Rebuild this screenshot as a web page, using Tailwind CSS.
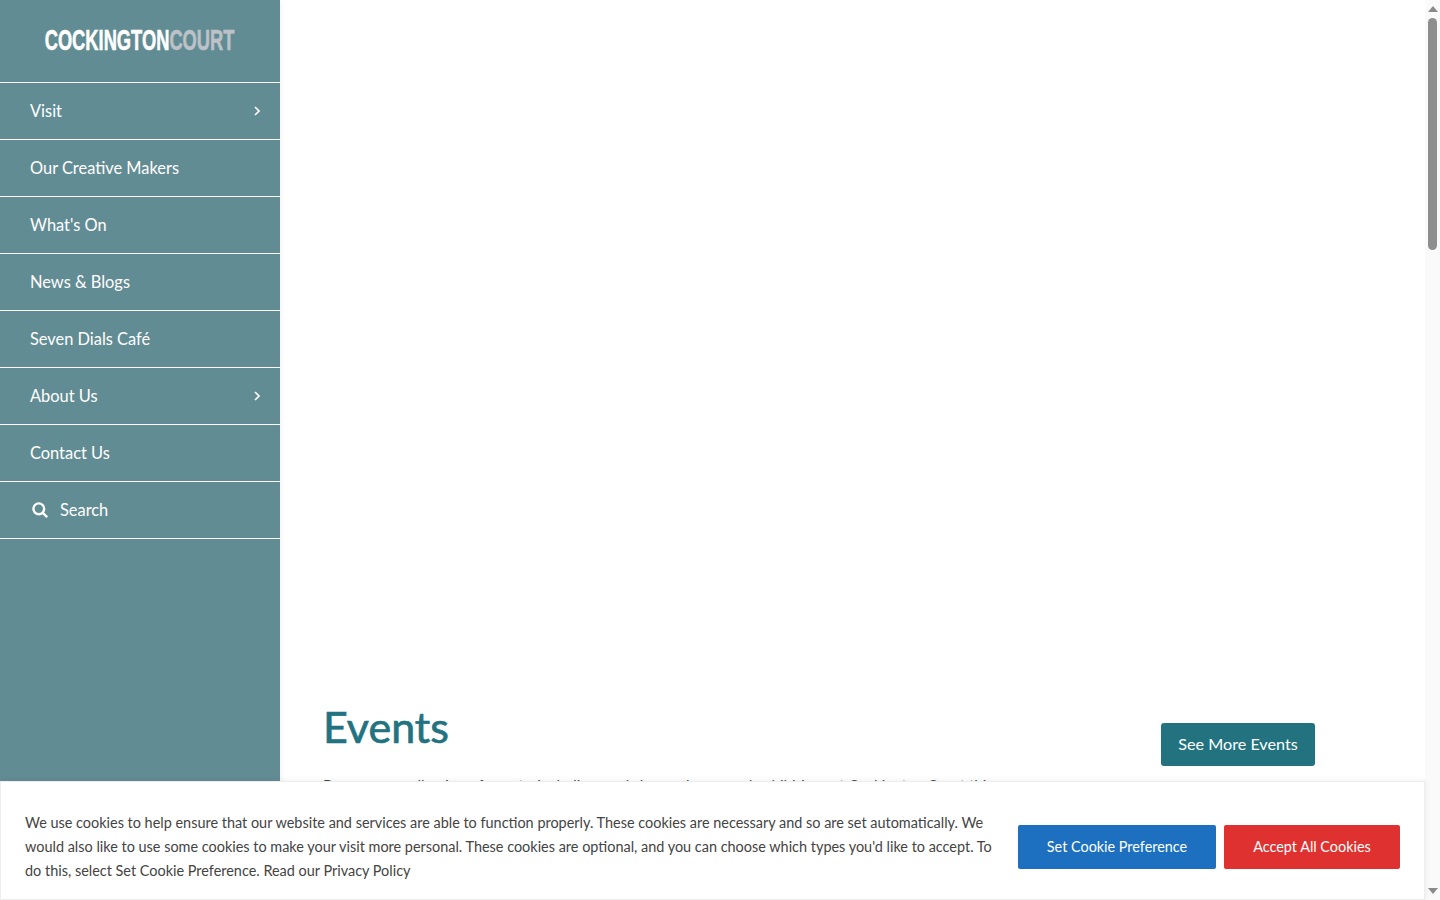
<!DOCTYPE html>
<html lang="en">
<head>
  <meta charset="UTF-8" />
  <meta name="viewport" content="width=device-width, initial-scale=1" />
  <title>Events - Cockington Court</title>
  <script src="https://cdn.jsdelivr.net/npm/@tailwindcss/browser@4"></script>
</head>
<body class="bg-white overflow-hidden font-['Lato',sans-serif]">
  <div class="relative flex h-[900px] w-[1440px] overflow-hidden">
    <!-- sidebar -->
    <aside class="w-[280px] shrink-0 bg-[#628c94] text-white shadow-[0_0_6px_rgba(0,0,0,0.08)]">
      <div class="h-[83px] flex items-center justify-center border-b border-white pb-[2px]">
        <span class="font-['Liberation_Sans',sans-serif] font-bold text-[30px] leading-none scale-x-[0.61] whitespace-nowrap [-webkit-text-stroke:0.6px]">COCKINGTON<span class="text-[#bcc2c7]">COURT</span></span>
      </div>
      <nav class="text-[16.4px]">
        <a class="h-[57px] flex items-center justify-between pl-[30px] pr-[20px] border-b border-white">Visit
          <svg class="w-[6px] h-[10px]" viewBox="0 0 6 10" fill="none" stroke="white" stroke-width="1.6"><path d="M1 1l4 4-4 4" /></svg>
        </a>
        <a class="h-[57px] flex items-center pl-[30px] border-b border-white">Our Creative Makers</a>
        <a class="h-[57px] flex items-center pl-[30px] border-b border-white">What's On</a>
        <a class="h-[57px] flex items-center pl-[30px] border-b border-white">News &amp; Blogs</a>
        <a class="h-[57px] flex items-center pl-[30px] border-b border-white">Seven Dials Café</a>
        <a class="h-[57px] flex items-center justify-between pl-[30px] pr-[20px] border-b border-white">About Us
          <svg class="w-[6px] h-[10px]" viewBox="0 0 6 10" fill="none" stroke="white" stroke-width="1.6"><path d="M1 1l4 4-4 4" /></svg>
        </a>
        <a class="h-[57px] flex items-center pl-[30px] border-b border-white">Contact Us</a>
        <a class="h-[57px] flex items-center gap-[12px] pl-[32px] border-b border-white">
          <svg class="w-[16px] h-[16px]" viewBox="0 0 16 16" fill="none" stroke="white" stroke-width="2.4"><circle cx="6.8" cy="6.8" r="5.4" /><path d="M10.8 10.8L15.2 15.2" /></svg>
          Search
        </a>
      </nav>
    </aside>

    <!-- main content -->
    <main class="flex-1 pl-[43px] pr-[110px] pt-[699px]">
      <div class="flex justify-between items-start">
        <h1 class="text-[#22737f] text-[43px] leading-[56px] [-webkit-text-stroke:0.7px]">Events</h1>
        <a class="mt-[24px] h-[43px] w-[154px] flex items-center justify-center rounded-[3px] bg-[#22737f] text-white text-[16.2px]">See More Events</a>
      </div>
      <p class="mt-[7px] text-[15px] leading-[24px] text-[#444] whitespace-nowrap">Browse our collection of events, including workshops, classes and exhibitions at Cockington Court this year.</p>
    </main>

    <!-- scrollbar -->
    <div class="w-[15px] shrink-0 bg-[#fafafa] flex flex-col items-center relative">
      <svg class="mt-[6px] w-[10px] h-[6px]" viewBox="0 0 10 6" fill="#8a8a8a"><path d="M5 0l5 6H0z" /></svg>
      <div class="mt-[6px] w-[9px] h-[232px] rounded-full bg-[#8e8e8e]"></div>
      <svg class="absolute bottom-[6px] w-[10px] h-[6px]" viewBox="0 0 10 6" fill="#8a8a8a"><path d="M0 0h10L5 6z" /></svg>
    </div>

    <!-- cookie banner -->
    <div class="absolute left-0 top-[781px] h-[119px] w-[1425px] bg-white border border-[#eeeeee] shadow-[0_0_6px_rgba(0,0,0,0.08)] flex items-center pl-[24px] pr-[24px] pt-[12px] gap-[18px]">
      <p class="flex-1 text-[14.45px] leading-[24px] text-[#444]">We use cookies to help ensure that our website and services are able to function properly. These cookies are necessary and so are set automatically. We would also like to use some cookies to make your visit more personal. These cookies are optional, and you can choose which types you'd like to accept. To do this, select Set Cookie Preference. Read our Privacy Policy</p>
      <div class="flex gap-[8px] shrink-0">
        <button class="h-[44px] w-[198px] rounded-[2px] bg-[#1c70bf] text-white text-[14.4px]">Set Cookie Preference</button>
        <button class="h-[44px] w-[176px] rounded-[2px] bg-[#e03131] text-white text-[14.4px]">Accept All Cookies</button>
      </div>
    </div>
  </div>
</body>
</html>
